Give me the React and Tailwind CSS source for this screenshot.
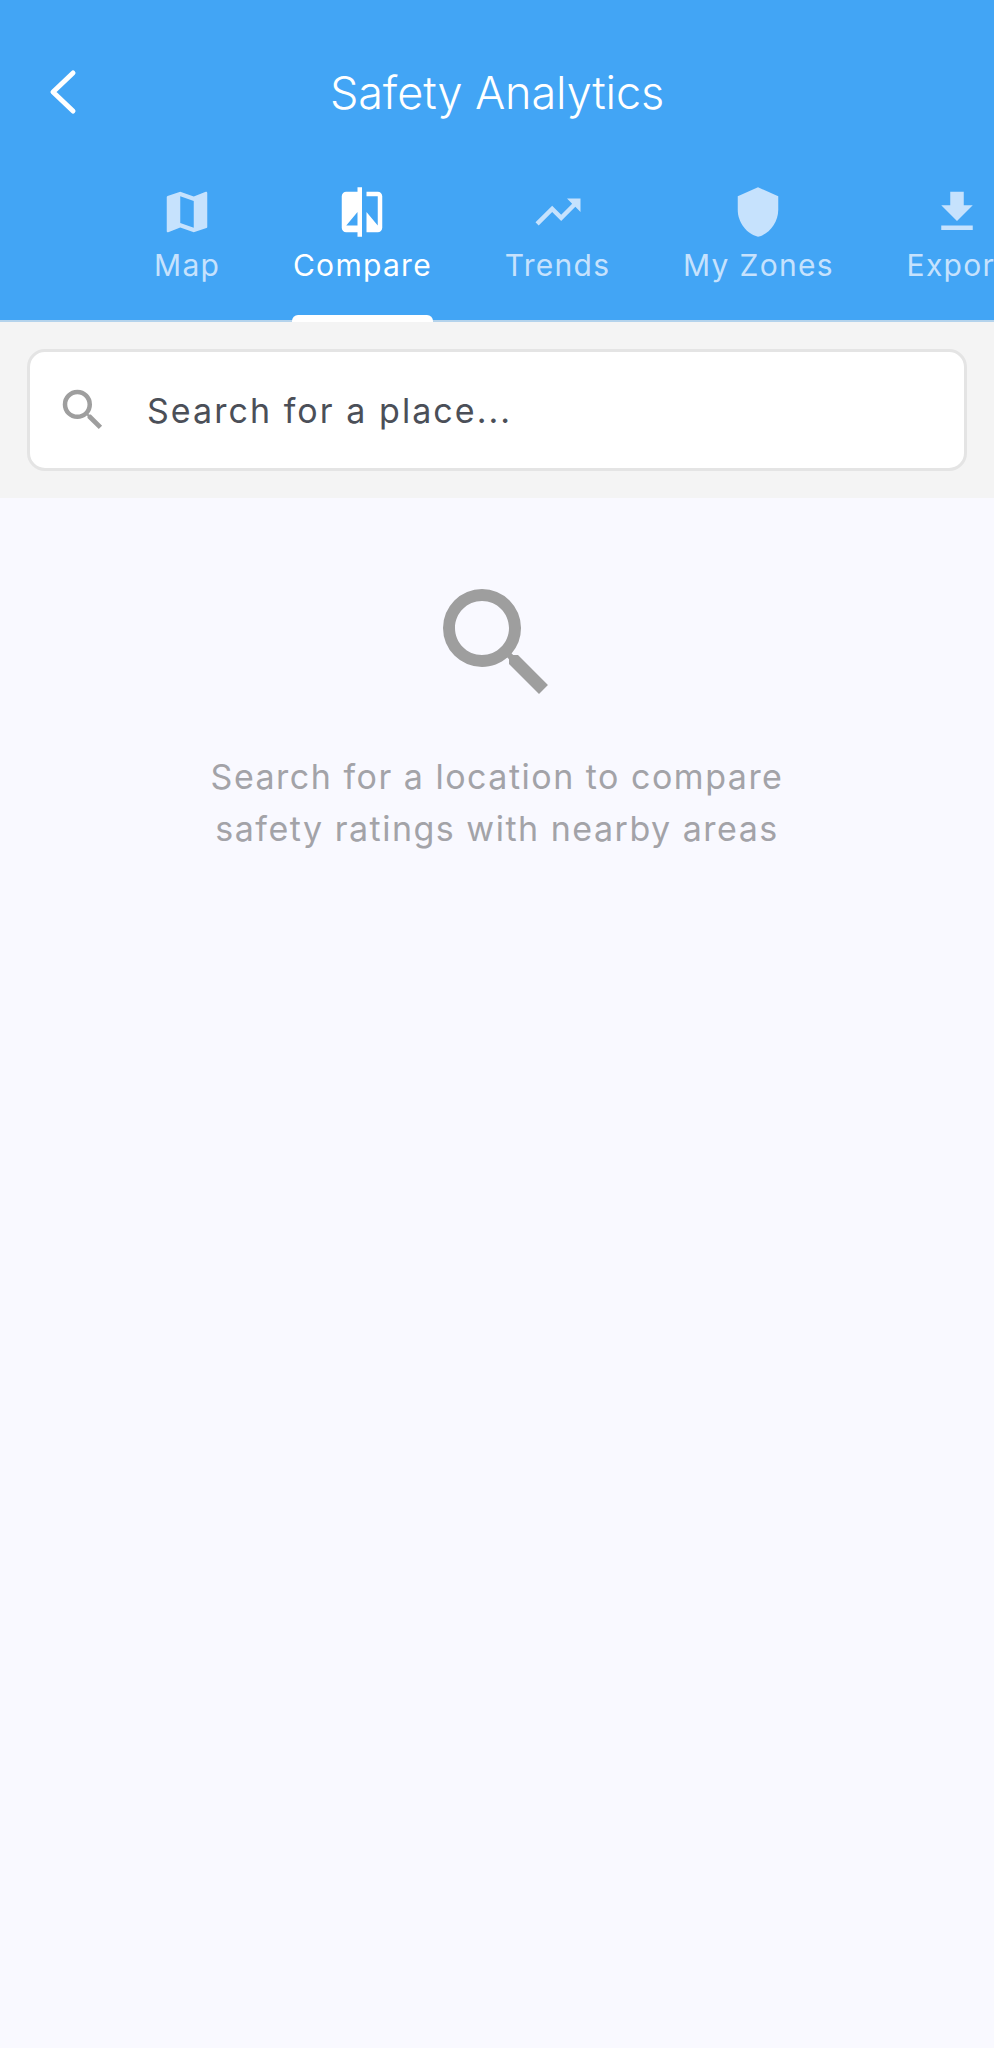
const tabs = [
  { label: 'Map', path: 'M20.5 3l-.16.03L15 5.1 9 3 3.36 4.9c-.21.07-.36.25-.36.48V20.5c0 .28.22.5.5.5l.16-.03L9 18.9l6 2.1 5.64-1.9c.21-.07.36-.25.36-.48V3.5c0-.28-.22-.5-.5-.5zM15 19l-6-2.11V5l6 2.11V19z' },
  { label: 'Compare', active: true, path: 'M10 3H5c-1.1 0-2 .9-2 2v14c0 1.1.9 2 2 2h5v2h2V1h-2v2zm0 15H5l5-6v6zm9-15h-5v2h5v13l-5-6v9h5c1.1 0 2-.9 2-2V5c0-1.1-.9-2-2-2z' },
  { label: 'Trends', path: 'M16 6l2.29 2.29-4.88 4.88-4-4L2 16.59 3.41 18l6-6 4 4 6.3-6.29L22 12V6z' },
  { label: 'My Zones', path: 'M12 1L3 5v6c0 5.55 3.84 10.74 9 12 5.16-1.26 9-6.45 9-12V5l-9-4z' },
  { label: 'Export', path: 'M19 9h-4V3H9v6H5l7 7 7-7zM5 18v2h14v-2H5z' },
]

const SEARCH = 'M15.5 14h-.79l-.28-.27A6.471 6.471 0 0 0 16 9.5 6.5 6.5 0 1 0 9.5 16c1.61 0 3.09-.59 4.23-1.57l.27.28v.79l5 4.99L20.49 19l-4.99-5zm-6 0C7.01 14 5 11.99 5 9.5S7.01 5 9.5 5 14 7.01 14 9.5 11.99 14 9.5 14z'

function Icon({ path, className }) {
  return (
    <svg viewBox="0 0 24 24" fill="currentColor" className={className}>
      <path d={path} />
    </svg>
  )
}

export default function App() {
  return (
    <div className="flex flex-col h-[2048px] bg-[#f9f9ff] font-['Inter',sans-serif] overflow-hidden">
      <header className="bg-[#42a5f5] border-b-2 border-[#b4d3ec]">
        <div className="h-[185px] flex items-center justify-center relative">
          <button className="absolute left-[48px] top-[68px] text-white">
            <svg viewBox="0 0 30 48" className="w-[30px] h-[48px]" fill="none" stroke="currentColor" strokeWidth="5" strokeLinecap="round" strokeLinejoin="round">
              <polyline points="25,5 5,24 25,43" />
            </svg>
          </button>
          <h1 className="text-[45px] leading-[56px] font-light text-white tracking-[-0.1px]">Safety Analytics</h1>
        </div>
        <div className="h-[135px] flex pl-[154px] whitespace-nowrap">
          {tabs.map(t => (
            <div key={t.label} className={`relative shrink-0 flex flex-col items-center mr-[72.7px] ${t.active ? 'text-white' : 'text-[#c6e2fd]'}`}>
              <Icon path={t.path} className="w-[54px] h-[54px] shrink-0" />
              <span className="text-[30px] leading-[52px] tracking-[1.3px]">{t.label}</span>
              {t.active && <div className="absolute -bottom-[2px] -left-px -right-px h-[7px] bg-white rounded-t-[6px]" />}
            </div>
          ))}
        </div>
      </header>

      <div className="bg-[#f4f4f4] p-[27px]">
        <div className="h-[122px] flex items-center bg-white border-[3px] border-[#e4e4e4] rounded-[18px] pl-[26px]">
          <Icon path={SEARCH} className="w-[54px] h-[54px] text-[#9e9e9e] shrink-0" />
          <span className="ml-[37px] text-[34px] tracking-[2.05px] text-[#4b4f58]">Search for a place...</span>
        </div>
      </div>

      <main className="flex flex-col items-center pt-[73px]">
        <Icon path={SEARCH} className="w-[144px] h-[144px] text-[#9e9e9e]" />
        <p className="mt-[36px] text-center text-[34px] leading-[52px] tracking-[1.5px] text-[#a3a3a8]">
          Search for a location to compare<br />safety ratings with nearby areas
        </p>
      </main>
    </div>
  )
}
